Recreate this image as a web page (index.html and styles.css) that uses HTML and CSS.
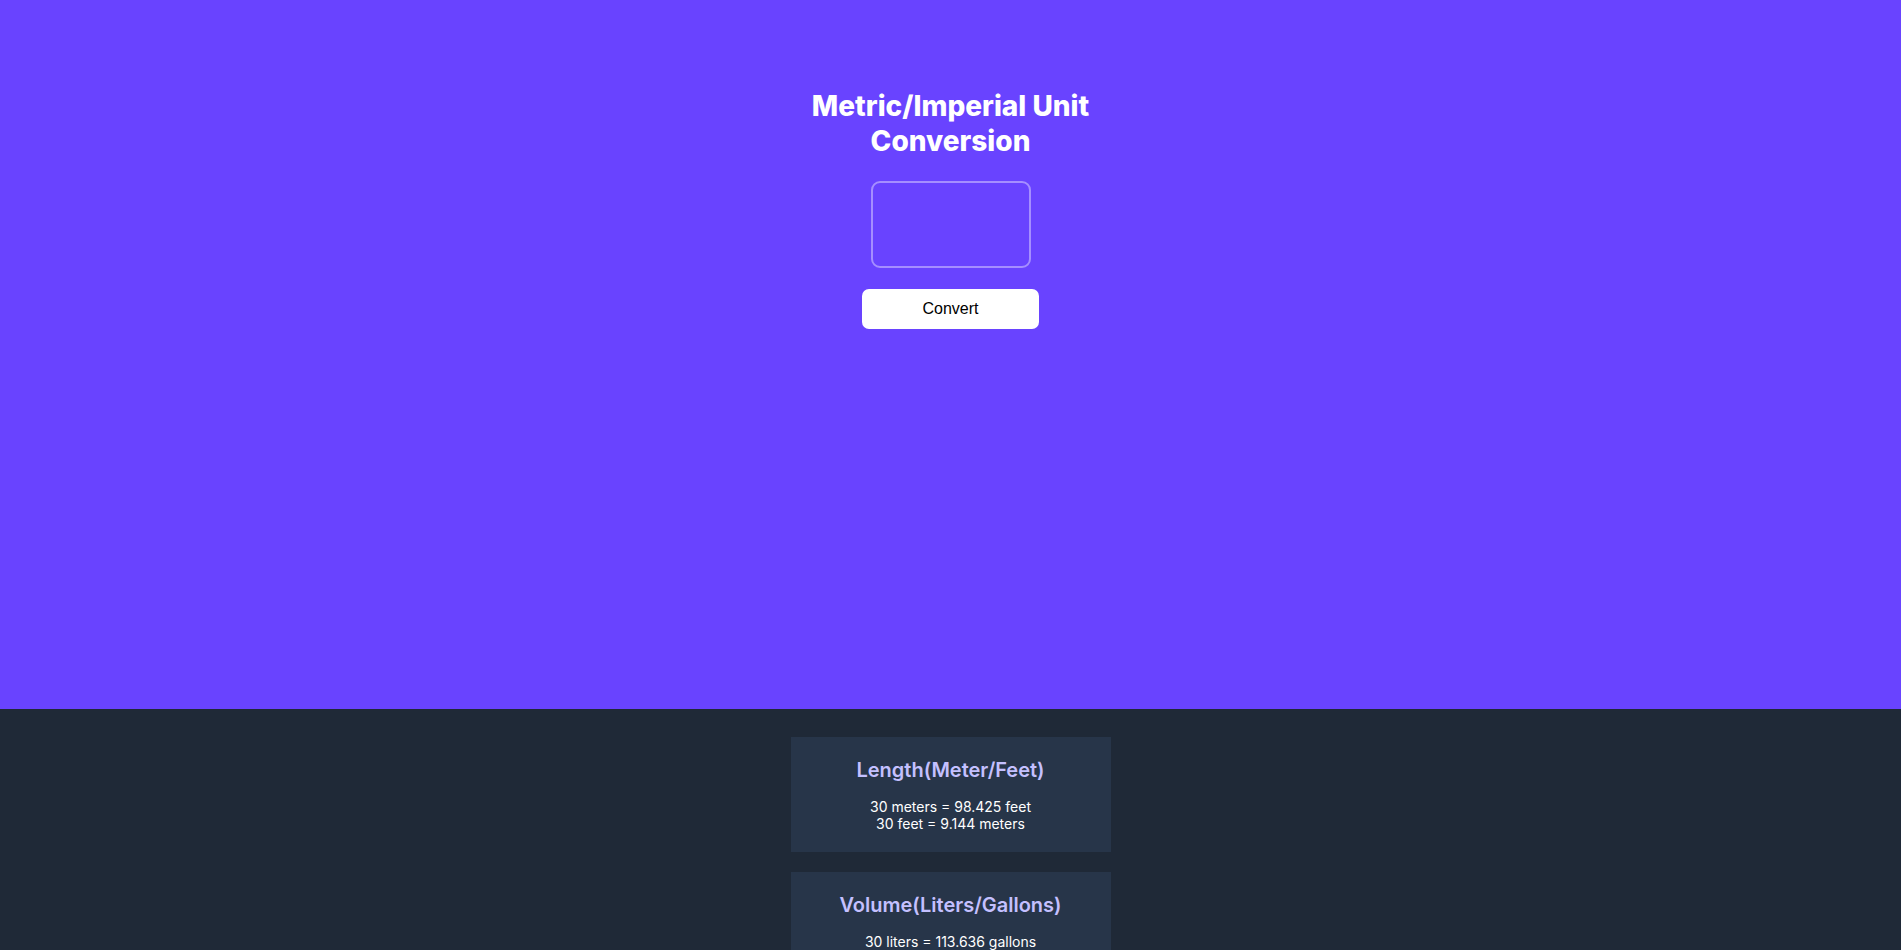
FILE: index.html
```html
<!DOCTYPE html>
<html lang="en">
<head>
<meta charset="utf-8">
<title>Unit Conversion</title>
<link rel="stylesheet" href="styles.css">
</head>
<body>
<main class="page">
  <section class="hero">
    <h1 class="hero-title">Metric/Imperial Unit Conversion</h1>
    <input class="hero-input" type="text" aria-label="Value">
    <button class="hero-btn" type="button">Convert</button>
  </section>
  <section class="results">
    <div class="card">
      <h2 class="card-title">Length(Meter/Feet)</h2>
      <p class="card-text">30 meters = 98.425 feet<br>30 feet = 9.144 meters</p>
    </div>
    <div class="card">
      <h2 class="card-title">Volume(Liters/Gallons)</h2>
      <p class="card-text">30 liters = 113.636 gallons<br>30 gallons = 132.000 liters</p>
    </div>
    <div class="card">
      <h2 class="card-title">Mass(Kilograms/Pounds)</h2>
      <p class="card-text">30 kilos = 66.139 pounds<br>30 pounds = 13.608 kilos</p>
    </div>
  </section>
</main>
</body>
</html>
```

FILE: styles.css
```css
* { box-sizing: border-box; }
html, body { margin: 0; padding: 0; }
body {
  font-family: Inter, "Noto Sans", sans-serif;
  background: #1f2937;
  overflow: hidden;
}
.page { display: flex; flex-direction: column; }
.hero {
  background: #6943ff;
  height: 709px;
  display: flex;
  flex-direction: column;
  align-items: center;
  padding-top: 89px;
}
.hero-title {
  margin: 0;
  width: 300px;
  text-align: center;
  color: #ffffff;
  font-size: 28px;
  font-weight: 800;
  line-height: 35px;
}
.hero-input {
  margin-top: 22px;
  width: 160px;
  height: 87px;
  background: transparent;
  border: 2px solid rgba(255, 255, 255, 0.4);
  border-radius: 9px;
  color: #fff;
  font-size: 24px;
  text-align: center;
  outline: none;
}
.hero-btn {
  margin-top: 21px;
  width: 177px;
  height: 40px;
  background: #ffffff;
  border: none;
  border-radius: 7px;
  font-family: "Liberation Sans", Arial, sans-serif;
  font-size: 16px;
  color: #000;
}
.results {
  display: flex;
  flex-direction: column;
  align-items: center;
  gap: 20px;
  padding-top: 28px;
}
.card {
  width: 320px;
  background: #273549;
  padding: 21px 10px 20px;
  text-align: center;
}
.card-title {
  margin: 0;
  color: #c4c0ff;
  font-size: 20px;
  font-weight: 600;
  line-height: 24px;
}
.card-text {
  margin: 16px 0 0;
  color: #ffffff;
  font-size: 14px;
  line-height: 17px;
}
```
